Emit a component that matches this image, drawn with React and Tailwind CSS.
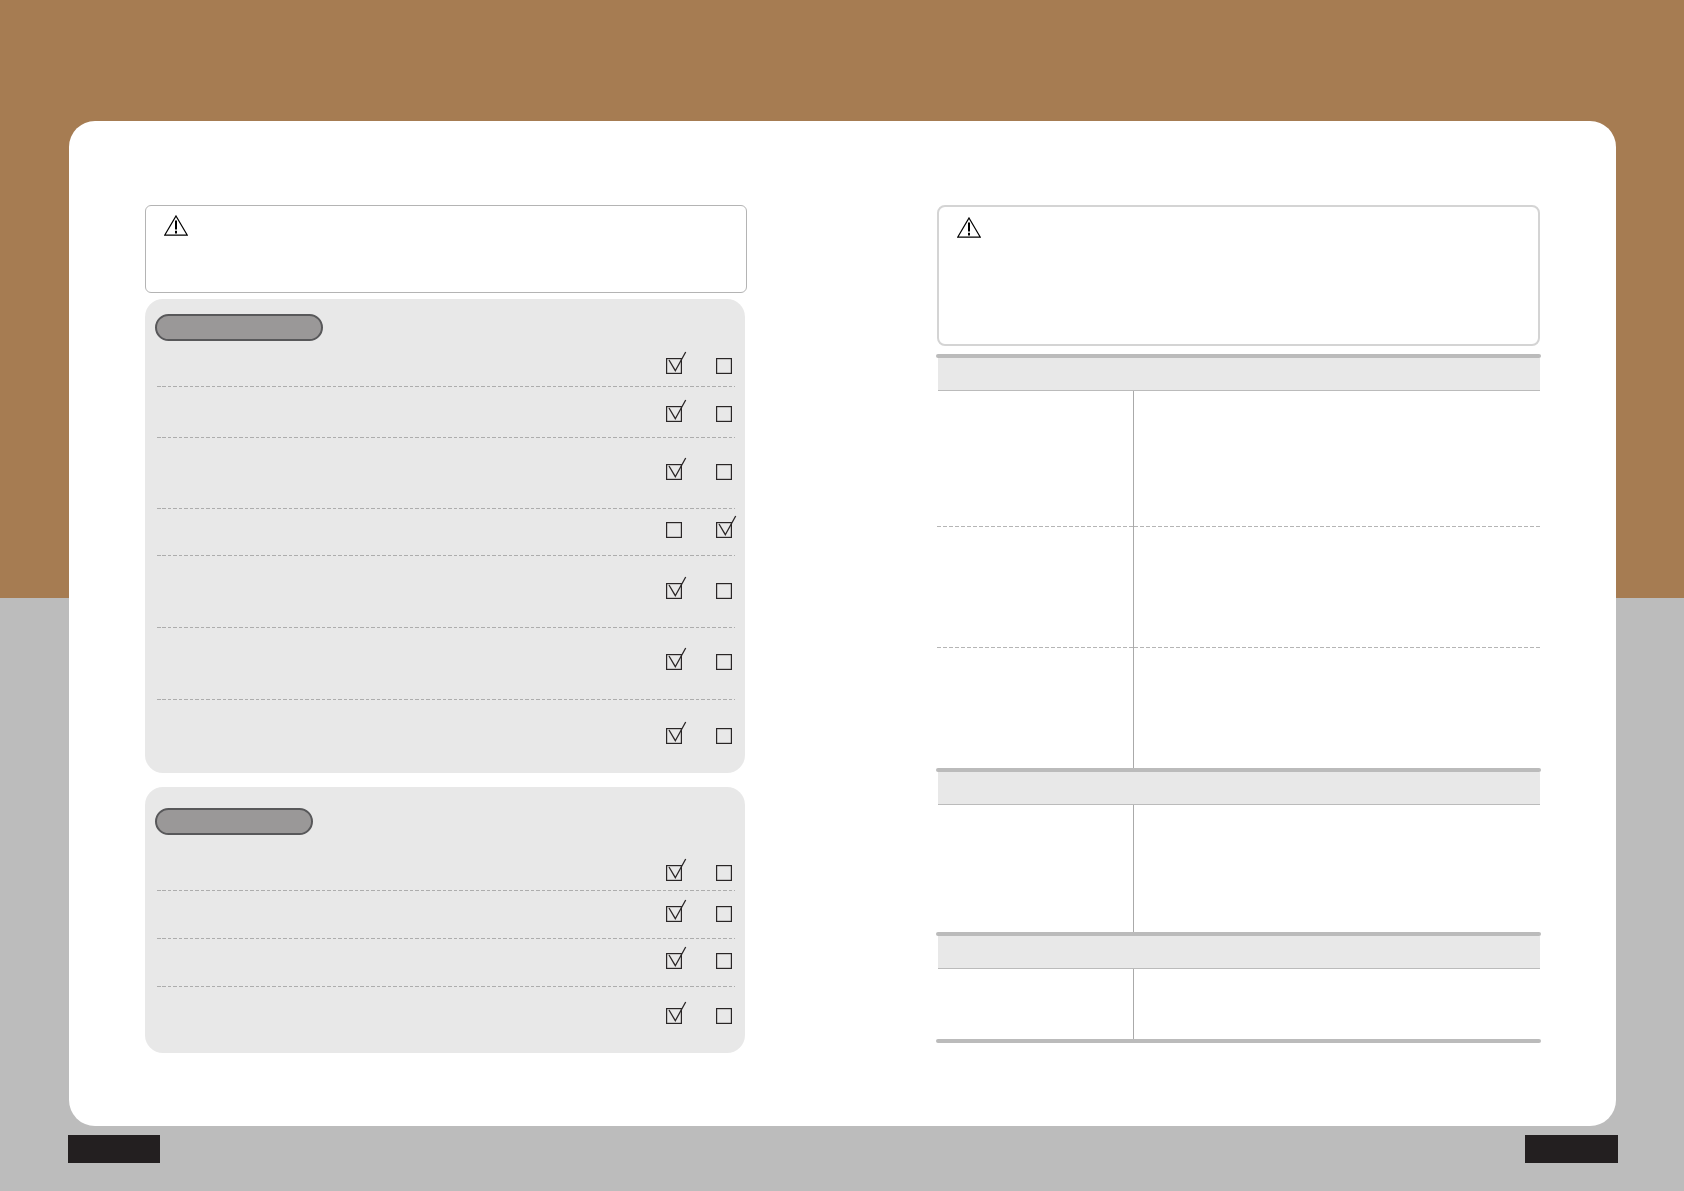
const panelOne = [
  { row: "h-[45px] pt-[17px]", left: true },
  { row: "h-[50px] pt-[19px]", left: true },
  { row: "h-[70px] pt-[26px]", left: true },
  { row: "h-[46px] pt-[13px]", left: false },
  { row: "h-[71px] pt-[27px]", left: true },
  { row: "h-[71px] pt-[26px]", left: true },
  { row: "h-[73px] pt-[28px]", left: true, last: true },
];

const panelTwo = [
  { row: "h-[55px] pt-[30px]", left: true },
  { row: "h-[47px] pt-[15px]", left: true },
  { row: "h-[47px] pt-[14px]", left: true },
  { row: "h-[66px] pt-[21px]", left: true, last: true },
];

function Warning({ className }) {
  return (
    <svg viewBox="0 0 24 21" className={className} fill="none" stroke="#000" aria-hidden="true">
      <path d="M12 1 L23.2 20 H0.8 Z" strokeWidth="1.25" strokeLinejoin="miter" />
      <path d="M12 5.5 V14.5" strokeWidth="2" />
      <path d="M12 15.8 V18.4" strokeWidth="2" />
    </svg>
  );
}

function Box({ checked }) {
  return (
    <svg viewBox="0 0 16 16" className="h-4 w-4 shrink-0 overflow-visible" fill="none" stroke="#2a2627" aria-hidden="true">
      <rect x="0.6" y="0.6" width="14.8" height="14.8" strokeWidth="1.2" />
      {checked && <path d="M3 2 L9.3 12.7 L19.7 -6" strokeWidth="1.3" />}
    </svg>
  );
}

function Dash({ color = "bg-[repeating-linear-gradient(90deg,#adadad_0_3.5px,transparent_3.5px_5.5px)]" }) {
  return <div className={`h-px w-full shrink-0 ${color}`} />;
}

function RightDash() {
  return <Dash color="bg-[repeating-linear-gradient(90deg,#b5b5b5_0_4px,transparent_4px_6px)]" />;
}

function Panel({ rows, pill, className }) {
  return (
    <section className={`rounded-[18px] bg-[#e8e8e8] pl-[10px] ${className}`}>
      <div className={`h-[27px] rounded-full border-2 border-[#58585a] bg-[#9a9898] ${pill}`} />
      <div className="ml-[2px] mr-[10px]">
        {rows.map((r, i) => (
          <div key={i}>
            <div className={`flex items-start justify-end gap-[34px] pr-[3px] ${r.row}`}>
              <Box checked={r.left} />
              <Box checked={!r.left} />
            </div>
            {!r.last && <Dash />}
          </div>
        ))}
      </div>
    </section>
  );
}

function SectionHead() {
  return (
    <>
      <div className="h-1 rounded-full bg-[#bbbbbb]" />
      <div className="ml-[2px] mr-px h-[33px] border-b border-[#bbbbbb] bg-[#e8e8e8]" />
    </>
  );
}

function Row({ height, dash }) {
  return (
    <div className={`mx-px grid grid-cols-[196px_1fr] ${height}`}>
      <div className="flex items-end">{dash && <RightDash />}</div>
      <div className="flex items-end border-l border-[#aaaaaa]">{dash && <RightDash />}</div>
    </div>
  );
}

export default function App() {
  return (
    <div className="h-[1191px] w-[1684px] overflow-hidden bg-[linear-gradient(#a67c52_0_598px,#bcbcbc_598px)]">
      <div className="pl-[69px] pt-[121px]">
        <main className="flex h-[1005px] w-[1547px] justify-between rounded-[26px] bg-white pl-[76px] pr-[75px] pt-[84px]">
          <div className="flex w-[602px] flex-col">
            <div className="mb-[6px] h-[88px] rounded-[6px] border border-[#b4b4b4] pl-[18px] pt-[9px]">
              <Warning className="h-[21px] w-6" />
            </div>
            <Panel rows={panelOne} pill="w-[168px]" className="mb-[14px] h-[474px] w-[600px] pt-[15px]" />
            <Panel rows={panelTwo} pill="w-[158px]" className="h-[266px] w-[600px] pt-[21px]" />
          </div>

          <div className="flex w-[605px] flex-col">
            <div className="mx-px mb-[8px] h-[141px] rounded-[8px] border-2 border-[#d4d4d4] pl-[18px] pt-[10px]">
              <Warning className="h-[21px] w-6" />
            </div>
            <SectionHead />
            <Row height="h-[136px]" dash />
            <Row height="h-[121px]" dash />
            <Row height="h-[120px]" />
            <SectionHead />
            <Row height="h-[127px]" />
            <SectionHead />
            <Row height="h-[70px]" />
            <div className="h-1 rounded-full bg-[#bbbbbb]" />
          </div>
        </main>
        <footer className="-ml-px mt-[9px] flex w-[1550px] justify-between">
          <div className="h-[28px] w-[92px] bg-[#231f20]" />
          <div className="h-[28px] w-[93px] bg-[#231f20]" />
        </footer>
      </div>
    </div>
  );
}
